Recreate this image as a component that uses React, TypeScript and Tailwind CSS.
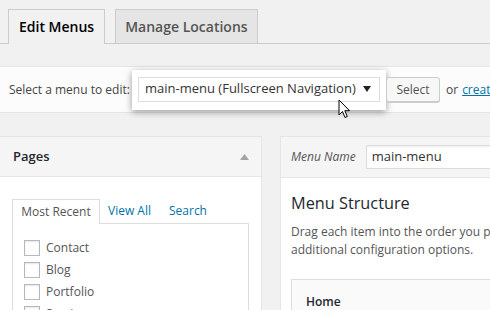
import React from "react";

const font = { fontFamily: '"Open Sans", "Noto Sans", sans-serif' };

function Checkbox() {
  return <span className="block w-[16px] h-[16px] border border-[#b4b9be] bg-white shadow-[inset_0_1px_2px_rgba(0,0,0,0.1)] shrink-0" />;
}

export default function App() {
  return (
    <div className="relative w-[490px] h-[310px] overflow-hidden bg-[#f1f1f1] text-[#444]" style={font}>
      {/* Top tabs */}
      <div className="flex gap-[10px] pt-[9px] pl-[8px] border-b border-[#ccc]">
        <div className="h-[35px] -mb-px px-[10px] flex items-center border border-b-0 border-[#ccc] bg-[#f1f1f1] text-[14px] font-semibold text-[#000] leading-[24px]">
          Edit Menus
        </div>
        <div className="h-[34px] px-[9px] flex items-center border border-b-0 border-[#ccc] bg-[#e5e5e5] text-[14px] font-semibold text-[#555] leading-[24px]">
          Manage Locations
        </div>
      </div>

      {/* Manage menus bar */}
      <div className="mt-[22px] h-[47px] flex items-center bg-[#fcfcfc] border-y border-[#e5e5e5] whitespace-nowrap">
        <span className="shrink-0 pl-[9px] w-[132px] text-[12px] text-[#444]">Select a menu to edit:</span>
        <div className="shrink-0 bg-white px-[6px] pt-[7px] pb-[8px] shadow-[0_2px_7px_rgba(0,0,0,0.4)]">
          <div className="w-[242px] h-[25px] border border-[#ddd] bg-white flex items-center justify-between pl-[6px] pr-[8px]">
            <span className="text-[13px] text-[#333]">main-menu (Fullscreen Navigation)</span>
            <svg width="8" height="6" viewBox="0 0 8 6"><path d="M0 0 L8 0 L4 6 Z" fill="#222" /></svg>
          </div>
        </div>
        <div className="shrink-0 h-[25px] w-[54px] flex items-center justify-center border border-[#ccc] bg-[#f7f7f7] rounded-[3px] text-[12px] text-[#555] shadow-[0_1px_0_#ccc]">
          Select
        </div>
        <span className="shrink-0 ml-[6px] text-[12px] text-[#444]">or</span>
        <span className="shrink-0 ml-[4px] text-[12px] text-[#0073aa] underline">create a new menu</span>
      </div>

      {/* Columns */}
      <div className="mt-[23px] flex gap-[18px] items-start">
        {/* Left panel */}
        <div className="w-[262px] shrink-0 border-t border-r border-[#e5e5e5] bg-white">
          <div className="h-[40px] flex items-center justify-between pl-[13px] pr-[12px] bg-[#f5f5f5] border-b border-[#e5e5e5]">
            <span className="text-[13px] font-semibold text-[#23282d]">Pages</span>
            <svg width="9" height="6" viewBox="0 0 9 6"><path d="M0 6 L9 6 L4.5 0 Z" fill="#a0a5aa" /></svg>
          </div>
          <div className="pt-[22px] pl-[12px] pr-[12px]">
            <div className="flex items-end text-[12px]">
              <div className="h-[25px] -mb-px w-[88px] flex items-center justify-center border border-b-0 border-[#ddd] bg-white text-[#555] relative z-10">
                Most Recent
              </div>
              <span className="ml-[8px] h-[24px] flex items-center text-[#0073aa]">View All</span>
              <span className="ml-[18px] h-[24px] flex items-center text-[#0073aa]">Search</span>
            </div>
            <div className="border border-[#ddd] bg-white pt-[13px] pl-[11px] h-[120px]">
              {["Contact", "Blog", "Portfolio", "Services"].map((t) => (
                <div key={t} className="h-[22px] flex items-center gap-[6px] text-[12px] text-[#555]">
                  <Checkbox />
                  <span>{t}</span>
                </div>
              ))}
            </div>
          </div>
        </div>

        {/* Right panel */}
        <div className="w-[300px] shrink-0 border-t border-l border-[#e5e5e5] bg-white">
          <div className="h-[41px] flex items-center pl-[10px] bg-[#f5f5f5] border-b border-[#e5e5e5] whitespace-nowrap">
            <span className="text-[12px] italic text-[#555]">Menu Name</span>
            <div className="ml-[10px] h-[24px] w-[200px] border border-[#ddd] bg-white flex items-center pl-[5px] text-[13px] text-[#333] shadow-[inset_0_1px_2px_rgba(0,0,0,0.07)]">
              main-menu
            </div>
          </div>
          <div className="pt-[13px] pl-[10px] whitespace-nowrap">
            <div className="text-[16.3px] leading-[24px] text-[#23282d]">Menu Structure</div>
            <div className="mt-[8px] text-[12px] leading-[18px] text-[#555]">
              <div>Drag each item into the order you prefer. Click the arrow</div>
              <div>additional configuration options.</div>
            </div>
            <div className="mt-[20px] h-[60px] border border-[#ddd] bg-[#fafafa] pt-[8px] pl-[14px]">
              <span className="text-[12px] leading-[18px] font-semibold text-[#23282d]">Home</span>
            </div>
          </div>
        </div>
      </div>

      {/* Mouse cursor */}
      <svg className="absolute left-[338px] top-[99px]" width="13" height="20" viewBox="0 0 13 20">
        <path d="M1 1 L1 16 L4.5 12.5 L7 18.5 L9.3 17.5 L6.8 11.7 L11.5 11.7 Z" fill="#fff" stroke="#000" strokeWidth="1" strokeLinejoin="round" />
      </svg>
    </div>
  );
}
